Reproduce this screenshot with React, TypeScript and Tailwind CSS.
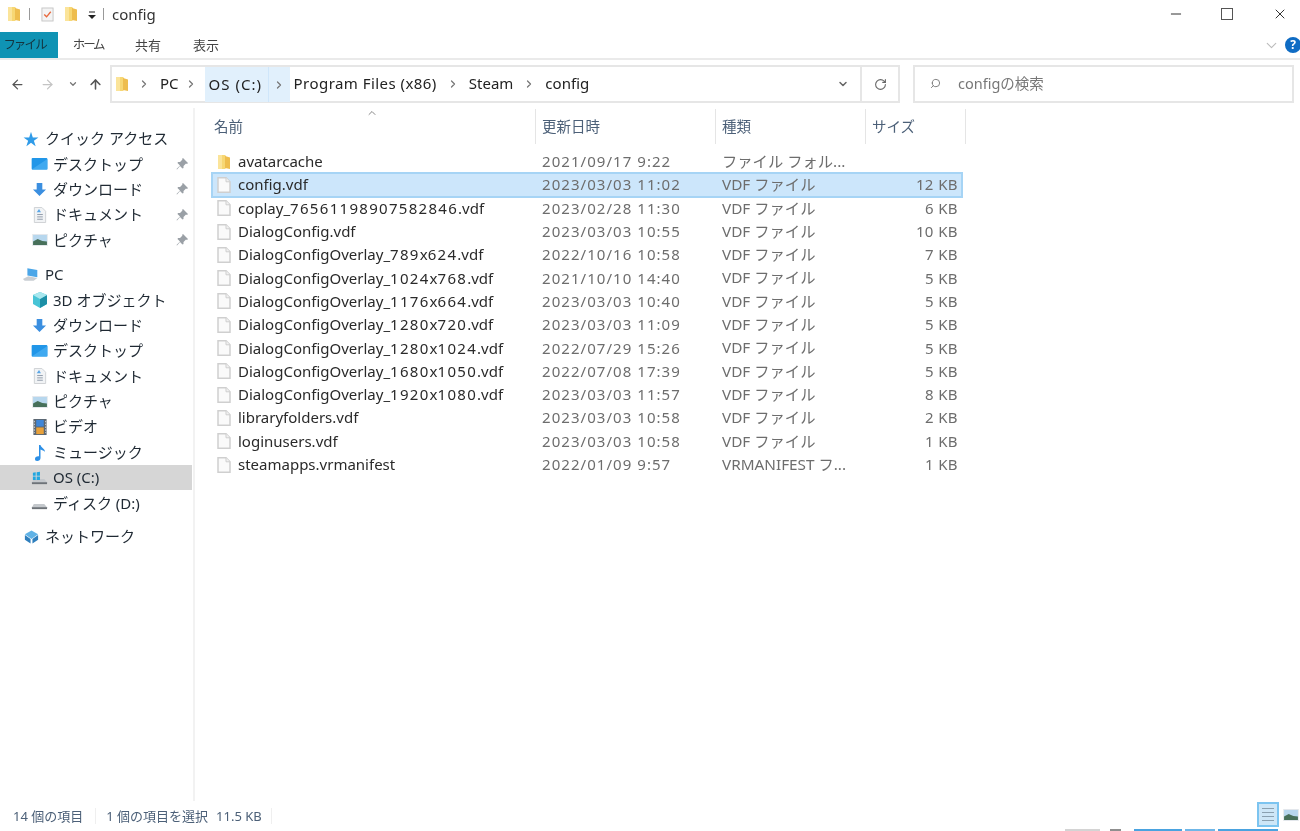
import React from 'react';
import { ArrowLeft, ArrowRight, ArrowUp, ChevronDown, ChevronRight, ChevronUp, Minus, RotateCw, Search, X } from 'lucide-react';

const FolderIcon = ({ className = '' }: { className?: string }) => (
  <svg viewBox="0 0 14 16" className={className}>
    <path d="M1 1h7l1 1v12l-1 1H1z" fill="#f7d774" />
    <path d="M8 2l5 1.500v11.500l-5-1z" fill="#eebd4e" />
    <path d="M1 1h4v14H1z" fill="#fbe49a" />
  </svg>
);

const FileIcon = () => (
  <svg viewBox="0 0 14 16" className="h-[16px] w-[14px] shrink-0">
    <path d="M1 .8h8l4 4v10.400H1z" fill="#fafafa" stroke="#cfcfcf" strokeWidth="1.500" />
    <path d="M9 .8v4h4" fill="#f0f0f0" stroke="#cfcfcf" />
  </svg>
);

const DesktopIcon = () => (
  <svg viewBox="0 0 17 13" className="h-[12px] w-[17px]">
    <rect width="17" height="12.500" rx="1" fill="#2196e8" />
    <path d="M0 12.500L17 1v11.500z" fill="#3fa9f0" />
  </svg>
);

const DownloadIcon = () => (
  <svg viewBox="0 0 16 16" className="h-[15px] w-[15px]">
    <path d="M5 1h6v7h4l-7 7-7-7h4z" fill="#3b8fe0" />
  </svg>
);

const DocIcon = () => (
  <svg viewBox="0 0 14 17" className="h-[16px] w-[14px]">
    <path d="M1 .5h8l4 4v12H1z" fill="#f1f3f5" stroke="#cdd0d3" />
    <path d="M4 8h6M4 10.500h6M4 13h6" stroke="#8d99a6" />
    <path d="M6 2l2 3.500H3.500z" fill="#5aa6e6" />
  </svg>
);

const PictureIcon = () => (
  <svg viewBox="0 0 17 13" className="h-[12px] w-[16px]">
    <rect width="17" height="13" fill="#e6e9ec" />
    <rect x="1" y="1" width="15" height="11" fill="#b7d7ee" />
    <path d="M1 8l5-2.500 5 2 5 .5v4H1z" fill="#47705a" />
  </svg>
);

const VideoIcon = () => (
  <svg viewBox="0 0 14 17" className="h-[16px] w-[14px]">
    <rect width="14" height="17" fill="#5c6670" />
    <rect x="3" y="1" width="8" height="7" fill="#3f86d8" />
    <rect x="3" y="9" width="8" height="7" fill="#e8a13a" />
    <path d="M1 2v13M13 2v13" stroke="#d9dde0" strokeWidth="1" strokeDasharray="1.500 1.500" />
  </svg>
);

const MusicIcon = () => (
  <svg viewBox="0 0 14 17" className="h-[17px] w-[14px]">
    <path d="M6 1h1.500c.5 3 4.500 3.500 4.500 7-1-1.500-3-2-4.500-2.500V14c0 1.800-1.500 3-3.300 3S2 16 2 14.700 3.500 12 6 12.300z" fill="#2c8fe6" />
  </svg>
);

const PcIcon = () => (
  <svg viewBox="0 0 20 16" className="h-[15px] w-[19px]">
    <path d="M6 1l11 2v8L6 9z" fill="#4ba6e8" />
    <path d="M1 13l6-3 10 2-4 3H3z" fill="#c9ced3" />
  </svg>
);

const CubeIcon = () => (
  <svg viewBox="0 0 16 16" className="h-[16px] w-[16px]">
    <path d="M8 0l7 3v9l-7 4-7-4V3z" fill="#48c4d6" />
    <path d="M8 7l7-4v9l-7 4z" fill="#1c8fa6" />
    <path d="M8 0l7 3-7 4-7-4z" fill="#a9e7ee" />
  </svg>
);

const DriveIcon = ({ windows = false }: { windows?: boolean }) => (
  <svg viewBox="0 0 18 14" className="h-[14px] w-[17px]">
    <path d="M3 8h11l3 3.500v1H1v-1z" fill="#c4c8cc" />
    <path d="M1 11.500h16v2H1z" fill="#6e7378" />
    {windows && <path d="M2 1.500l3-.5V4.500H2zM6 .8L9.500.3v4.200H6zM2 5.500h3v3.500H2zM6 5.500h3.500V9H6z" fill="#22a7e0" />}
  </svg>
);

const NetworkIcon = () => (
  <svg viewBox="0 0 18 16" className="h-[16px] w-[17px]">
    <path d="M9 1l7 4-7 5-7-5z" fill="#5fb2e6" />
    <path d="M2 6l6 4v5l-6-4zM10 10l6-4v5l-6 4z" fill="#2f7fbd" />
  </svg>
);

const PinIcon = () => (
  <svg viewBox="0 0 12 12" className="h-[12px] w-[12px]">
    <path d="M7 0l5 5-1 1-1-.5L7.500 8 7.500 10l-1 .5L4 8l-3 3.500L0.500 11 4 7.500 1.500 5l.5-1h2l2.500-2.500L6 1z" fill="#9aa0a6" />
  </svg>
);

// digits sit wider in the reference font than in Noto Sans, so space them out
const FileName = ({ name }: { name: string }) => (
  <>
    {name.split(/(\d+)/).map((part, i) =>
      i % 2 === 1 ? (
        <span key={i} className="tracking-[1.3px]">{part}</span>
      ) : (
        <span key={i}>{part}</span>
      )
    )}
  </>
);

type NavItem = { label: string; icon: React.ReactNode; pin?: boolean; active?: boolean; top?: boolean; gap?: string };

const NavRow = ({ label, icon, pin, active, top, gap }: NavItem) => (
  <div className={`flex h-[25.400px] items-center text-[#1f2933] ${active ? 'bg-[#d6d6d6]' : ''} ${gap ?? ''}`}>
    <span className={`flex shrink-0 justify-center ${top ? 'ml-[22px] w-[18px]' : 'ml-[31px] w-[17px]'}`}>{icon}</span>
    <span className="ml-[5px]">{label}</span>
    {pin && <span className="ml-auto mr-[4px] flex"><PinIcon /></span>}
  </div>
);

const navItems: NavItem[] = [
  { label: 'クイック アクセス', top: true, icon: <span className="text-[16px] leading-none text-[#2f9be8]">★</span> },
  { label: 'デスクトップ', pin: true, icon: <DesktopIcon /> },
  { label: 'ダウンロード', pin: true, icon: <DownloadIcon /> },
  { label: 'ドキュメント', pin: true, icon: <DocIcon /> },
  { label: 'ピクチャ', pin: true, icon: <PictureIcon /> },
  { label: 'PC', top: true, gap: 'mt-[9px]', icon: <PcIcon /> },
  { label: '3D オブジェクト', icon: <CubeIcon /> },
  { label: 'ダウンロード', icon: <DownloadIcon /> },
  { label: 'デスクトップ', icon: <DesktopIcon /> },
  { label: 'ドキュメント', icon: <DocIcon /> },
  { label: 'ピクチャ', icon: <PictureIcon /> },
  { label: 'ビデオ', icon: <VideoIcon /> },
  { label: 'ミュージック', icon: <MusicIcon /> },
  { label: 'OS (C:)', active: true, icon: <DriveIcon windows /> },
  { label: 'ディスク (D:)', icon: <DriveIcon /> },
  { label: 'ネットワーク', top: true, gap: 'mt-[8px]', icon: <NetworkIcon /> },
];

const files = [
  { name: 'avatarcache', date: '2021/09/17 9:22', type: 'ファイル フォル...', size: '', folder: true },
  { name: 'config.vdf', date: '2023/03/03 11:02', type: 'VDF ファイル', size: '12 KB', selected: true },
  { name: 'coplay_76561198907582846.vdf', date: '2023/02/28 11:30', type: 'VDF ファイル', size: '6 KB' },
  { name: 'DialogConfig.vdf', date: '2023/03/03 10:55', type: 'VDF ファイル', size: '10 KB' },
  { name: 'DialogConfigOverlay_789x624.vdf', date: '2022/10/16 10:58', type: 'VDF ファイル', size: '7 KB' },
  { name: 'DialogConfigOverlay_1024x768.vdf', date: '2021/10/10 14:40', type: 'VDF ファイル', size: '5 KB' },
  { name: 'DialogConfigOverlay_1176x664.vdf', date: '2023/03/03 10:40', type: 'VDF ファイル', size: '5 KB' },
  { name: 'DialogConfigOverlay_1280x720.vdf', date: '2023/03/03 11:09', type: 'VDF ファイル', size: '5 KB' },
  { name: 'DialogConfigOverlay_1280x1024.vdf', date: '2022/07/29 15:26', type: 'VDF ファイル', size: '5 KB' },
  { name: 'DialogConfigOverlay_1680x1050.vdf', date: '2022/07/08 17:39', type: 'VDF ファイル', size: '5 KB' },
  { name: 'DialogConfigOverlay_1920x1080.vdf', date: '2023/03/03 11:57', type: 'VDF ファイル', size: '8 KB' },
  { name: 'libraryfolders.vdf', date: '2023/03/03 10:58', type: 'VDF ファイル', size: '2 KB' },
  { name: 'loginusers.vdf', date: '2023/03/03 10:58', type: 'VDF ファイル', size: '1 KB' },
  { name: 'steamapps.vrmanifest', date: '2022/01/09 9:57', type: 'VRMANIFEST フ...', size: '1 KB' },
];

export default function App() {
  return (
    <div className="relative flex h-[831px] w-[1300px] flex-col overflow-hidden bg-white text-[15px] font-['Noto_Sans','Noto_Sans_CJK_JP',sans-serif] leading-none blur-[0.4px]">
      {/* Title bar */}
      <div className="flex h-[30px] shrink-0 items-center pl-[7px] pb-[2px]">
        <FolderIcon className="h-[16px] w-[14px]" />
        <span className="ml-[8px] h-[12px] w-px bg-[#999]" />
        <svg viewBox="0 0 14 16" className="ml-[11px] h-[15px] w-[13px]">
          <rect x="1" y="1" width="12" height="14" fill="#f4f4f4" stroke="#c4c4c4" />
          <path d="M3.500 8l2.500 2.500L10.500 5" fill="none" stroke="#e8683c" strokeWidth="1.500" />
        </svg>
        <FolderIcon className="ml-[10px] h-[16px] w-[14px]" />
        <svg viewBox="0 0 8 9" className="ml-[10px] mt-[3px] h-[9px] w-[8px]">
          <path d="M1 1h6" stroke="#222" />
          <path d="M0 4h8L4 8z" fill="#222" />
        </svg>
        <span className="ml-[7px] h-[12px] w-px bg-[#999]" />
        <span className="ml-[8px] text-[#333]">config</span>
        <div className="ml-auto flex items-center text-[#333]">
          <Minus className="mr-[37px] h-[16px] w-[16px]" strokeWidth={1.500} />
          <div className="mr-[39px] h-[12px] w-[12px] border-[1.500px] border-[#555]" />
          <X className="mr-[12px] h-[16px] w-[16px]" strokeWidth={1.500} />
        </div>
      </div>

      {/* Ribbon tabs */}
      <div className="flex h-[30px] shrink-0 items-center border-b-2 border-[#eaeaea] pt-[2px] text-[13px] text-[#444] [font-feature-settings:'palt']">
        <div className="flex h-[26px] w-[58px] items-center justify-center bg-[#0f93b4] pr-[6px] text-[12.500px] text-[#14343f]">ファイル</div>
        <span className="ml-[15px] w-[31px] whitespace-nowrap text-[12.500px] tracking-[-1.800px]">ホーム</span>
        <span className="ml-[31px]">共有</span>
        <span className="ml-[32px]">表示</span>
        <ChevronDown className="ml-auto mr-[5px] h-[17px] w-[17px] text-[#bbb]" strokeWidth={1.500} />
        <span className="mr-[-1px] flex h-[16px] w-[16px] items-center justify-center rounded-full bg-[#0f6cc4] text-[12px] font-bold text-white">?</span>
      </div>

      {/* Address row */}
      <div className="flex h-[48px] shrink-0 items-center pl-[10px] pr-[6px]">
        <ArrowLeft className="h-[15px] w-[15px] text-[#555]" strokeWidth={2} />
        <ArrowRight className="ml-[15px] h-[15px] w-[15px] text-[#c4c4c4]" strokeWidth={2} />
        <ChevronDown className="ml-[13px] h-[10px] w-[10px] text-[#777]" strokeWidth={3} />
        <ArrowUp className="ml-[10px] h-[15px] w-[15px] text-[#555]" strokeWidth={2.500} />
        <div className="ml-[7px] flex h-[38px] w-[752px] items-center border-2 border-[#e6e6e6] pb-[1px] text-[#222]">
          <FolderIcon className="ml-[3px] h-[16px] w-[14px]" />
          <ChevronRight className="ml-[9px] mr-[10px] h-[12px] w-[12px] text-[#777]" strokeWidth={2.500} />
          <span>PC</span>
          <ChevronRight className="ml-[6px] mr-[8px] h-[12px] w-[12px] text-[#777]" strokeWidth={2.500} />
          <div className="flex h-[35px] items-stretch self-start bg-[#e1f0fc]">
            <span className="flex w-[64px] items-center border-r border-[#cfe6fa] pl-[4px] tracking-[1px]">OS (C:)</span>
            <span className="flex w-[21px] items-center justify-center">
              <ChevronRight className="h-[12px] w-[12px] text-[#777]" strokeWidth={2.500} />
            </span>
          </div>
          <span className="ml-[4px] tracking-[0.45px]">Program Files (x86)</span>
          <ChevronRight className="mx-[10px] h-[12px] w-[12px] text-[#777]" strokeWidth={2.500} />
          <span>Steam</span>
          <ChevronRight className="mx-[10px] h-[12px] w-[12px] text-[#777]" strokeWidth={2.500} />
          <span>config</span>
          <ChevronDown className="ml-auto mr-[11px] h-[12px] w-[12px] text-[#666]" strokeWidth={3} />
        </div>
        <div className="flex h-[38px] w-[38px] items-center justify-center border-2 border-l-0 border-[#e6e6e6]">
          <RotateCw className="h-[13px] w-[13px] text-[#666]" strokeWidth={2} />
        </div>
        <div className="ml-[13px] flex h-[38px] w-[381px] items-center border-2 border-[#e6e6e6] pb-[1px] text-[14.500px] text-[#777]">
          <Search className="ml-[15px] h-[11px] w-[11px] -scale-x-100" strokeWidth={2} />
          <span className="ml-[17px]">configの検索</span>
        </div>
      </div>

      {/* Body */}
      <div className="flex min-h-0 flex-1">
        <aside className="w-[195px] shrink-0 border-r-2 border-[#f2f2f2] pt-[18px] pr-[1px]">
          {navItems.map((item, i) => (
            <NavRow key={i} {...item} />
          ))}
        </aside>

        <main className="min-w-0 flex-1 pl-[16px] pt-[1px]">
          <div className="relative flex h-[35px] text-[14.500px] text-[#4c6078]">
            <ChevronUp className="absolute left-[155px] top-[-2px] h-[12px] w-[12px] text-[#888]" strokeWidth={2} />
            <div className="flex w-[325px] items-center border-r border-[#e5e5e5] pl-[3px]">名前</div>
            <div className="flex w-[180px] items-center border-r border-[#e5e5e5] pl-[6px]">更新日時</div>
            <div className="flex w-[150px] items-center border-r border-[#e5e5e5] pl-[6px]">種類</div>
            <div className="flex w-[100px] items-center border-r border-[#e5e5e5] pl-[6px]">サイズ</div>
          </div>
          <div className="ml-px mt-[6px] w-[750px]">
            {files.map((f) => (
              <div
                key={f.name}
                className={`flex h-[23.300px] items-center ${f.selected ? 'bg-[#cce6fb] outline-2 -outline-offset-1 outline-[#a6d4f5]' : ''}`}
              >
                <span className="ml-[3px] flex w-[18px] shrink-0 justify-center">
                  {f.folder ? <FolderIcon className="h-[16px] w-[14px]" /> : <FileIcon />}
                </span>
                <span className="ml-[5px] w-[304px] shrink-0 text-[#2a2a2a]"><FileName name={f.name} /></span>
                <span className="w-[180px] shrink-0 tracking-[1.05px] text-[#6d6d6d]">{f.date}</span>
                <span className="w-[150px] shrink-0 text-[15.300px] text-[#6d6d6d]">{f.type}</span>
                <span className="w-[86px] shrink-0 text-right tracking-[0.4px] text-[#6d6d6d]">{f.size}</span>
              </div>
            ))}
          </div>
        </main>
      </div>

      {/* Status bar */}
      <div className="relative flex h-[30px] shrink-0 items-center pl-[13px] text-[13px] text-[#4c6078]">
        <span>14 個の項目</span>
        <span className="ml-[12px] h-[16px] w-px bg-[#efefef]" />
        <span className="ml-[10px]">1 個の項目を選択</span>
        <span className="ml-[8px]">11.5 KB</span>
        <span className="ml-[9px] h-[16px] w-px bg-[#efefef]" />
        <div className="ml-auto mb-[3px] flex items-center">
          <div className="flex h-[25px] w-[22px] flex-col justify-center gap-[3px] border-2 border-[#7cc4f0] bg-[#cde6f7] px-[3px]">
            <span className="h-px bg-[#8aa0b0]" />
            <span className="h-px bg-[#8aa0b0]" />
            <span className="h-px bg-[#8aa0b0]" />
            <span className="h-px bg-[#8aa0b0]" />
          </div>
          <span className="ml-[4px] mr-[1px] flex"><PictureIcon /></span>
        </div>
        {/* sliver of the next window along the bottom edge */}
        <div className="absolute bottom-0 left-[1065px] flex h-[2px] items-stretch gap-[3px]">
          <span className="w-[35px] bg-[#d4d4d4]" />
          <span className="ml-[7px] w-[11px] bg-[#8f8f8f]" />
          <span className="ml-[10px] w-[48px] bg-[#4aa3e0]" />
          <span className="w-[30px] bg-[#6fb7e8]" />
          <span className="w-[60px] bg-[#4aa3e0]" />
        </div>
      </div>
    </div>
  );
}
